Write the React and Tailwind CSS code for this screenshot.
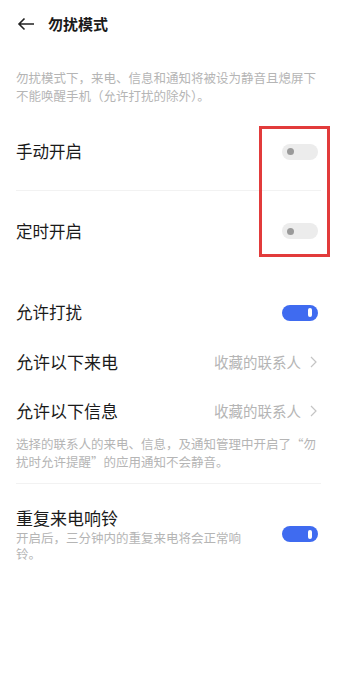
import React from 'react';

const font = { fontFamily: '"Noto Sans CJK SC", "Noto Sans", sans-serif' };

function Toggle({ on }) {
  if (on) {
    return (
      <div className="flex h-[16px] w-[36px] items-center justify-end rounded-full bg-[#3f6bf0] pr-[6px]">
        <div className="h-[9px] w-[4px] rounded-full bg-white" />
      </div>
    );
  }
  return (
    <div className="flex h-[16px] w-[36px] items-center rounded-full bg-[#ececec] pl-[5px]">
      <div className="h-[7px] w-[7px] rounded-full bg-[#9a9a9a]" />
    </div>
  );
}

function Chevron() {
  return (
    <svg width="7" height="12" viewBox="0 0 7 12" className="ml-[9px]">
      <path d="M1 1l5 5-5 5" fill="none" stroke="#c4c4c4" strokeWidth="1.2" />
    </svg>
  );
}

export default function App() {
  return (
    <div className="relative min-h-[698px] w-full bg-white text-[#1a1a1a]" style={font}>
      {/* header */}
      <div className="flex h-[48px] items-center pl-[17px]">
        <svg width="18" height="14" viewBox="0 0 18 14">
          <path d="M17 7H2M7.5 1.5L2 7l5.5 5.5" fill="none" stroke="#222" strokeWidth="1.6" />
        </svg>
        <span className="ml-[13px] text-[15px] font-semibold">勿扰模式</span>
      </div>

      <div className="px-4">
        <p className="mt-[21px] text-[12.5px] leading-[18px] text-[#b5b5b5]">
          勿扰模式下，来电、信息和通知将被设为静音且熄屏下不能唤醒手机（允许打扰的除外）。
        </p>

        <div className="mt-[8px] flex h-[78px] items-center justify-between border-b border-[#f2f2f2]">
          <span className="text-[16.5px]">手动开启</span>
          <div className="mr-[3px]"><Toggle /></div>
        </div>
        <div className="flex h-[80px] items-center justify-between">
          <span className="text-[16.5px]">定时开启</span>
          <div className="mr-[3px]"><Toggle /></div>
        </div>

        <div className="mt-[17px] flex h-[49px] items-center justify-between">
          <span className="text-[16.5px]">允许打扰</span>
          <div className="mr-[3px]"><Toggle on /></div>
        </div>
        <div className="flex h-[49px] items-center justify-between">
          <span className="text-[17px]">允许以下来电</span>
          <div className="mr-[4px] flex items-center text-[14.5px] text-[#b5b5b5]">
            收藏的联系人<Chevron />
          </div>
        </div>
        <div className="flex h-[49px] items-center justify-between">
          <span className="text-[17px]">允许以下信息</span>
          <div className="mr-[4px] flex items-center text-[14.5px] text-[#b5b5b5]">
            收藏的联系人<Chevron />
          </div>
        </div>
        <div className="border-b border-[#f2f2f2] pb-[12px]">
          <p className="text-[12.5px] leading-[18px] text-[#b5b5b5]">
            选择的联系人的来电、信息，及通知管理中开启了“勿扰时允许提醒”的应用通知不会静音。
          </p>
        </div>

        <div className="flex items-center justify-between pt-[22px]">
          <div className="w-[230px]">
            <div className="text-[17px] leading-[24px]">重复来电响铃</div>
            <p className="text-[12.5px] leading-[16px] text-[#b5b5b5]">
              开启后，三分钟内的重复来电将会正常响铃。
            </p>
          </div>
          <div className="mr-[3px]"><Toggle on /></div>
        </div>
      </div>

      {/* annotation box */}
      <div className="absolute left-[259px] top-[126px] h-[131px] w-[71px] border-[3px] border-[#e23b3b]" />
    </div>
  );
}
